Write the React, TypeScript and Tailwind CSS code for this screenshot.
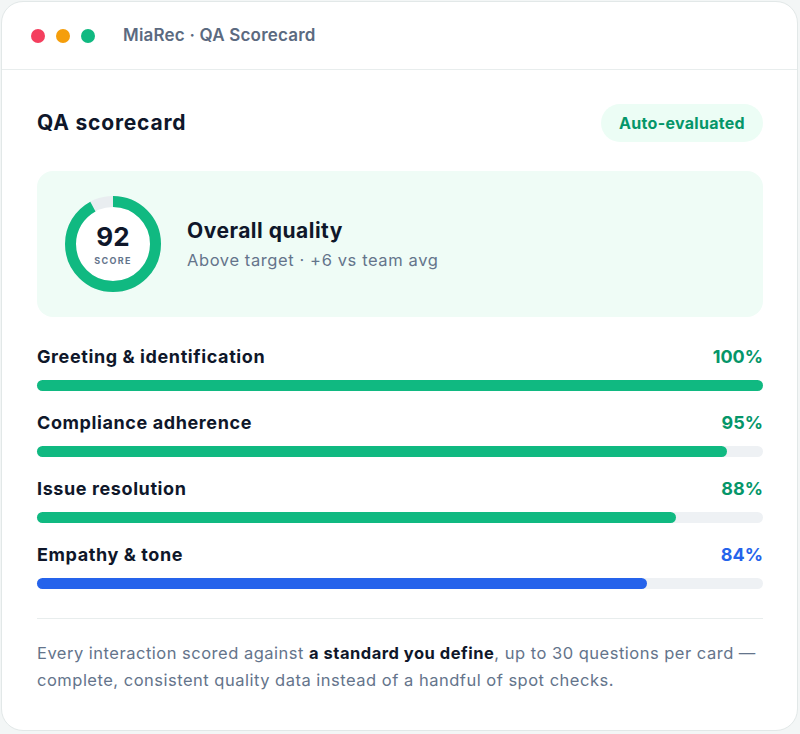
import React from 'react'

const rows = [
  { label: 'Greeting & identification', value: 100, tone: 'green' },
  { label: 'Compliance adherence', value: 95, tone: 'green' },
  { label: 'Issue resolution', value: 88, tone: 'green' },
  { label: 'Empathy & tone', value: 84, tone: 'blue' },
]

function ScoreRing({ score }: { score: number }) {
  const r = 42.5
  const c = 2 * Math.PI * r
  return (
    <div className="relative h-[96px] w-[96px] shrink-0">
      <svg width="96" height="96" viewBox="0 0 96 96" className="absolute inset-0">
        <circle cx="48" cy="48" r={r} fill="#ffffff" stroke="#e9edf0" strokeWidth="11" />
        <circle
          cx="48"
          cy="48"
          r={r}
          fill="none"
          stroke="#10b981"
          strokeWidth="11"
          strokeDasharray={`${(c * score) / 100} ${c}`}
          transform="rotate(-90 48 48)"
        />
      </svg>
      <div className="absolute inset-0 flex flex-col items-center justify-center">
        <span className="text-[26px] font-bold leading-none text-[#0f172a]">{score}</span>
        <span className="mt-[6px] text-[9px] font-bold leading-none tracking-[1.3px] text-[#64748b]">SCORE</span>
      </div>
    </div>
  )
}

export default function App() {
  return (
    <div className="min-h-screen bg-[#f3f6f6] p-px" style={{ fontFamily: 'Inter, "Noto Sans", sans-serif' }}>
      <div className="h-[730px] w-[797px] overflow-hidden rounded-[22px] border border-[#e2e8e8] bg-white">
        <div className="flex h-[68px] items-center border-b border-[#e8eded] px-[29px]">
          <div className="flex gap-[11px]">
            <span className="h-[14px] w-[14px] rounded-full bg-[#f43f5e]" />
            <span className="h-[14px] w-[14px] rounded-full bg-[#f59e0b]" />
            <span className="h-[14px] w-[14px] rounded-full bg-[#10b981]" />
          </div>
          <span className="ml-[28px] text-[17px] font-semibold tracking-[0.2px] text-[#5b6a80]">MiaRec · QA Scorecard</span>
        </div>

        <div className="pl-[35px] pr-[34px] pt-[34px]">
          <div className="flex items-center justify-between">
            <h1 className="text-[21px] font-bold tracking-[0.8px] text-[#0f172a]">QA scorecard</h1>
            <span className="flex h-[38px] items-center rounded-full bg-[#ecfdf5] px-[18px] text-[16px] font-bold tracking-[0.3px] text-[#059669]">
              Auto-evaluated
            </span>
          </div>

          <div className="mt-[29px] flex h-[146px] items-center gap-[26px] rounded-[16px] bg-[#effcf6] pl-[28px]">
            <ScoreRing score={92} />
            <div>
              <div className="text-[21px] font-bold leading-[28px] tracking-[0.5px] text-[#0f172a]">Overall quality</div>
              <div className="mt-[3px] text-[16.5px] leading-[24px] tracking-[0.6px] text-[#64748b]">Above target · +6 vs team avg</div>
            </div>
          </div>

          <div className="mt-[28px] flex flex-col gap-[20px]">
            {rows.map((row) => (
              <div key={row.label}>
                <div className="flex items-center justify-between text-[18px] font-bold leading-[24px]">
                  <span className="tracking-[0.6px] text-[#0f172a]">{row.label}</span>
                  <span className={row.tone === 'blue' ? 'text-[#2563eb]' : 'text-[#059669]'}>{row.value}%</span>
                </div>
                <div className="mt-[11px] h-[11px] rounded-full bg-[#eef1f4]">
                  <div
                    className={`h-full rounded-full ${row.tone === 'blue' ? 'bg-[#2563eb]' : 'bg-[#10b981]'}`}
                    style={{ width: `${row.value}%` }}
                  />
                </div>
              </div>
            ))}
          </div>

          <div className="mt-[29px] border-t border-[#e8eded]" />

          <p className="mt-[21px] text-[16.5px] leading-[27px] tracking-[0.5px] text-[#64748b]">
            Every interaction scored against <b className="font-bold text-[#0f172a]">a standard you define</b>, up to 30 questions per card — complete, consistent quality data instead of a handful of spot checks.
          </p>
        </div>
      </div>
    </div>
  )
}
